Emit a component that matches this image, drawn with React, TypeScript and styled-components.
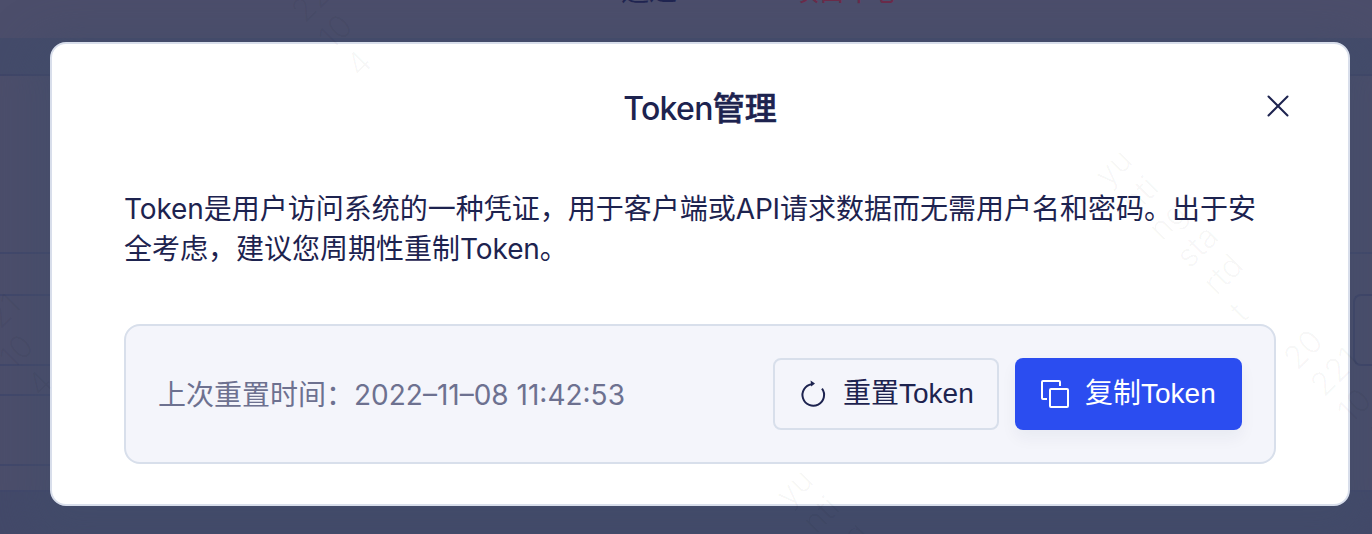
import React from "react";
import styled, { createGlobalStyle } from "styled-components";

const Global = createGlobalStyle`
  * { box-sizing: border-box; }
  body {
    margin: 0;
    overflow: hidden;
    font-family: Inter, "Noto Sans CJK SC", sans-serif;
    color: #1d234f;
  }
`;

const Page = styled.div`
  position: relative;
  width: 1372px;
  height: 534px;
  overflow: hidden;
  background: #4c4e6b;
`;

const Backdrop = styled.div`
  display: flex;
  flex-direction: column;
  height: 100%;
`;

const StatusBar = styled.div`
  display: flex;
  height: 38px;
  padding-left: 621px;
  font-size: 28px;
  line-height: 28px;
`;

const StatusText = styled.span<{ $width: number; $color: string; $spacing?: number }>`
  width: ${(p) => p.$width}px;
  height: 28px;
  margin-top: -23px;
  white-space: nowrap;
  letter-spacing: ${(p) => p.$spacing ?? 0}px;
  color: ${(p) => p.$color};
`;

const HeadRow = styled.div`
  height: 38px;
  background: #444b6a;
  border-bottom: 2px solid #3f4567;
`;

const BodyRow = styled.div`
  height: 178px;
  border-bottom: 2px solid #41476a;
`;

const FormArea = styled.div`
  display: flex;
  justify-content: space-between;
  height: 238px;
  padding-top: 40px;
  border-bottom: 2px solid #41476a;
`;

const FieldStack = styled.div`
  display: flex;
  flex-direction: column;
  gap: 28px;
  width: 600px;
`;

const Field = styled.div`
  height: 72px;
  border: 2px solid #41476a;
  border-left: 0;
`;

const SideField = styled.div`
  width: 19px;
  height: 72px;
  border: 2px solid #3d4266;
  border-right: 0;
  border-radius: 8px 0 0 8px;
`;

const Footer = styled.div`
  flex: 1;
  background: #434969;
`;

const Dialog = styled.section`
  position: absolute;
  left: 50px;
  top: 42px;
  display: flex;
  flex-direction: column;
  width: 1300px;
  height: 464px;
  padding: 44px 72px 40px;
  border: 2px solid #d8deeb;
  border-radius: 16px;
  background: #fff;
  box-shadow: 0 16px 40px 22px rgba(66, 76, 106, 0.55);
`;

const Header = styled.header`
  display: grid;
  grid-template-columns: 48px 1fr 48px;
  align-items: center;
  height: 40px;
  margin-right: -14px;
  margin-left: -14px;
`;

const Title = styled.h1`
  grid-column: 2;
  margin: 1px 0 0;
  text-align: center;
  font-size: 32px;
  font-weight: 500;
  line-height: 40px;
  letter-spacing: -0.7px;
`;

const TitleHan = styled.span`
  letter-spacing: 0;
  -webkit-text-stroke: 0.6px currentColor;
`;

const CloseButton = styled.button`
  display: flex;
  justify-content: flex-end;
  margin-top: -4px;
  padding: 0;
  border: 0;
  background: none;
  color: inherit;
`;

const Description = styled.p`
  margin: 61px 0 0;
  font-size: 28px;
  line-height: 40px;
`;

const Latin = styled.span<{ $spacing?: number }>`
  letter-spacing: ${(p) => p.$spacing ?? -0.1}px;
`;

const Panel = styled.div`
  display: flex;
  align-items: center;
  height: 140px;
  margin-top: auto;
  padding: 0 32px;
  border: 2px solid #d8dfeb;
  border-radius: 16px;
  background: #f4f5fb;
`;

const ResetTime = styled.div`
  flex: 1;
  padding-top: 1px;
  font-size: 28px;
  line-height: 40px;
  white-space: nowrap;
  color: #6d7190;
`;

const Button = styled.button<{ $primary?: boolean }>`
  display: flex;
  align-items: center;
  gap: 14px;
  width: ${(p) => (p.$primary ? 227 : 226)}px;
  height: 72px;
  margin-left: ${(p) => (p.$primary ? 16 : 0)}px;
  padding: 0 0 0 ${(p) => (p.$primary ? 24 : 22)}px;
  border: ${(p) => (p.$primary ? "0" : "2px solid #d8dfeb")};
  border-radius: 8px;
  background: ${(p) => (p.$primary ? "#2b4df0" : "transparent")};
  box-shadow: ${(p) => (p.$primary ? "0 8px 16px rgba(29, 35, 79, 0.05)" : "none")};
  color: ${(p) => (p.$primary ? "#fff" : "inherit")};
  font: 400 28px/40px "Liberation Sans", "Noto Sans CJK SC", sans-serif;
  white-space: nowrap;
`;

const Watermark = styled.div<{ $x: number; $y: number }>`
  position: absolute;
  left: ${(p) => p.$x}px;
  top: ${(p) => p.$y}px;
  transform: rotate(-45deg);
  transform-origin: 0 0;
  font-size: 32px;
  font-weight: 300;
  line-height: 38.2px;
  white-space: pre;
  color: rgba(0, 0, 0, 0.04);
  pointer-events: none;
`;

const NAME_MARK = "yu\nnti\nng\nsta\nrtd\nt";
const CODE_MARK = "20\n221\n10\n4";

const ResetIcon = () => (
  <svg width="32" height="32" viewBox="0 0 32 32" fill="none" stroke="currentColor" strokeWidth="2">
    <path d="M14.6 6.3A10.8 10.8 0 1 0 25 10.6" />
    <path d="M13.6 2.6 18 5.4 14.2 8.4Z" fill="currentColor" stroke="none" />
  </svg>
);

const CopyIcon = () => (
  <svg width="32" height="32" viewBox="0 0 32 32" fill="none" stroke="currentColor" strokeWidth="2">
    <rect x="11" y="11" width="18" height="18" rx="1" />
    <path d="M21 8V4a1 1 0 0 0-1-1H4a1 1 0 0 0-1 1v16a1 1 0 0 0 1 1h4" />
  </svg>
);

const CloseIcon = () => (
  <svg width="24" height="24" viewBox="0 0 24 24" fill="none" stroke="currentColor" strokeWidth="2" strokeLinecap="round">
    <path d="M2.5 1.5 21.5 20.5M21.5 1.5 2.5 20.5" />
  </svg>
);

export default function App() {
  return (
    <Page>
      <Global />
      <Backdrop>
        <StatusBar>
          <StatusText $width={170} $color="#1f2450">通过</StatusText>
          <StatusText $width={112} $color="#6b2b49" $spacing={-1}>项目中心</StatusText>
        </StatusBar>
        <HeadRow />
        <BodyRow />
        <FormArea>
          <FieldStack>
            <Field />
            <Field />
          </FieldStack>
          <SideField />
        </FormArea>
        <Footer />
      </Backdrop>
      <Dialog role="dialog">
        <Header>
          <Title>Token<TitleHan>管理</TitleHan></Title>
          <CloseButton aria-label="关闭"><CloseIcon /></CloseButton>
        </Header>
        <Description>
          <Latin>Token</Latin>是用户访问系统的一种凭证，用于客户端或<Latin $spacing={-0.2}>API</Latin>请求数据而无需用户名和密码。出于安全考虑，建议您周期性重制<Latin>Token</Latin>。
        </Description>
        <Panel>
          <ResetTime>上次重置时间：<Latin $spacing={0}>2022–11–08 11:42:53</Latin></ResetTime>
          <Button><ResetIcon /><span>重置Token</span></Button>
          <Button $primary><CopyIcon /><span>复制Token</span></Button>
        </Panel>
      </Dialog>
      <Watermark $x={1087} $y={167}>{NAME_MARK}</Watermark>
      <Watermark $x={768} $y={487}>{NAME_MARK}</Watermark>
      <Watermark $x={1276} $y={350}>{CODE_MARK}</Watermark>
      <Watermark $x={257} $y={-24}>{CODE_MARK}</Watermark>
      <Watermark $x={-62} $y={296}>{CODE_MARK}</Watermark>
    </Page>
  );
}
